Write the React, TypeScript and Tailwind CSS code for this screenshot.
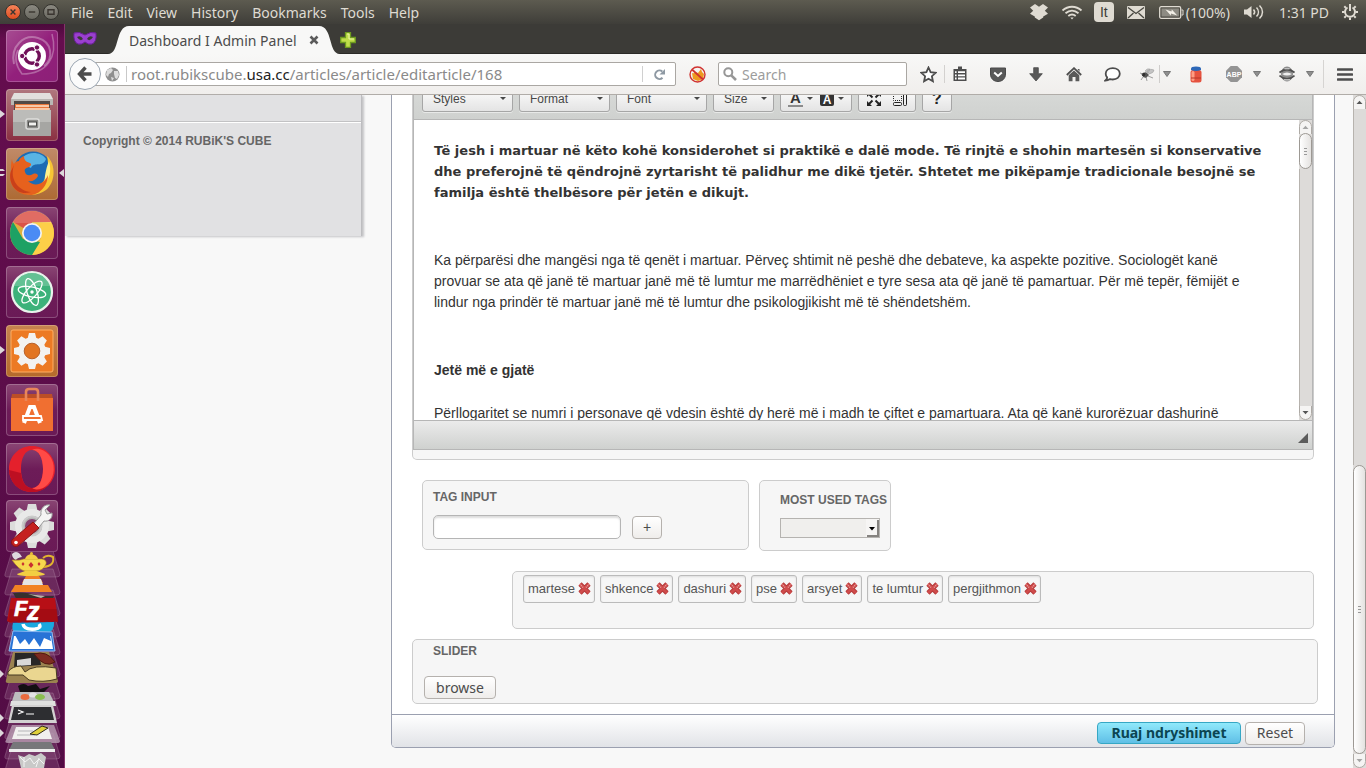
import React from "react";
import clsx from "clsx";

const UI = "font-['Noto_Sans','Open_Sans',sans-serif]";
const ARIAL = "font-['Liberation_Sans',Arial,sans-serif]";

/* ---------- Desktop top bar ---------- */

const MENUS = ["File", "Edit", "View", "History", "Bookmarks", "Tools", "Help"];

function WindowButton({ label, close, children }: { label: string; close?: boolean; children: React.ReactNode }) {
  return (
    <button
      aria-label={label}
      className={clsx(
        "flex size-4 items-center justify-center rounded-full border border-[#34332e]",
        close ? "bg-gradient-to-b from-[#f68358] to-[#dd4c1e]" : "bg-gradient-to-b from-[#8b8981] to-[#6a6961]",
      )}
    >
      <svg viewBox="0 0 14 14" className="size-3.5 shrink-0" fill="none" stroke="#3a3530" strokeWidth="1.4">
        {children}
      </svg>
    </button>
  );
}

function TopBar() {
  return (
    <header className="flex h-6 shrink-0 items-center bg-gradient-to-b from-[#5d5b50] to-[#3f3e39] text-[14px] text-[#dfdbd2]">
      <div className="flex w-[65px] shrink-0 gap-[3px] pl-[5px]">
        <WindowButton label="Close" close>
          <path d="M4.6 4.6l4.8 4.8M9.4 4.6L4.6 9.4" />
        </WindowButton>
        <WindowButton label="Minimize">
          <path d="M3.8 7h6.4" />
        </WindowButton>
        <WindowButton label="Maximize">
          <path d="M4 4.8h6v4.4H4z" />
        </WindowButton>
      </div>
      <nav className="flex gap-3.5 pl-1.5">
        {MENUS.map((m) => (
          <button key={m}>{m}</button>
        ))}
      </nav>
      <div className="ml-auto flex items-center">
        <svg viewBox="0 0 18 18" className="size-[18px]" fill="#dfdbd2">
          <path d="M5 1L9 3.8 13 1l5 3.6-3.2 3.1L18 10.8 13.2 13.5v1L9 17.2 4.8 14.5v-1L0 10.8l3.2-3.1L0 4.6z" />
        </svg>
        <svg viewBox="0 0 22 16" className="ml-[13px] h-4 w-[22px]" fill="none" stroke="#dfdbd2" strokeWidth="1.8">
          <path d="M1.5 6.5c5.5-5 13.500-5 19 0" />
          <path d="M4.500 9.300c4-3.500 9-3.500 13 0" />
          <path d="M7.300 12c2.500-2 5-2 7.400 0" />
          <path d="M9.300 13.600h3.400L11 15.600z" fill="#dfdbd2" stroke="none" />
        </svg>
        <span
          className={clsx(
            ARIAL,
            "ml-[11px] flex h-5 w-5 items-center justify-center rounded-sm bg-[#dfdbd2] text-[14px] text-[#3c3b37]",
          )}
        >
          It
        </span>
        <svg viewBox="0 0 18 13" className="ml-[13px] h-[13px] w-[18px]">
          <rect width="18" height="13" rx="1" fill="#dfdbd2" />
          <path d="M1 1.500l8 6 8-6M1 12l5.500-5M17 12l-5.500-5" fill="none" stroke="#47463f" strokeWidth="1.300" />
        </svg>
        <svg viewBox="0 0 25 13" className="ml-3.5 h-[13px] w-[25px]">
          <rect x=".7" y=".7" width="21" height="11.600" rx="1.500" fill="none" stroke="#dfdbd2" strokeWidth="1.300" />
          <rect x="2.500" y="2.500" width="17.400" height="8" fill="#8d8b83" />
          <path d="M22.500 4h1.500v5h-1.500" fill="none" stroke="#dfdbd2" />
          <path d="M6.500 3.500l6 2 .3-2 5.500 6-6.300-2-.2 2z" fill="#f3f0e8" />
        </svg>
        <span className="ml-0.5">(100%)</span>
        <svg viewBox="0 0 20 16" className="ml-3.5 h-4 w-5">
          <path d="M0 5.500h3L7.500 2v12L3 10.500H0z" fill="#dfdbd2" />
          <path
            d="M9.500 5.500c1.400 1.500 1.400 3.500 0 5M12.500 3.500c2.600 2.700 2.600 6.300 0 9M15.500 1.500c4 3.800 4 9.200 0 13"
            fill="none"
            stroke="#dfdbd2"
            strokeWidth="1.500"
          />
        </svg>
        <span className="ml-[15px]">1:31 PD</span>
        <svg viewBox="0 0 18 18" className="ml-3 mr-[7px] size-[18px]" fill="none" stroke="#dfdbd2">
          <path d="M6.500 4.500a5 5 0 1 0 5 0" strokeWidth="2" />
          <path d="M9 1v7" strokeWidth="2" />
          <path
            d="M3.300 3.300l1.600 1.600M14.700 3.300l-1.600 1.600M1 9h2.500M14.500 9H17M3.300 14.700l1.600-1.600M14.700 14.700l-1.600-1.600M9 14.500V17"
            strokeWidth="2"
          />
        </svg>
      </div>
    </header>
  );
}

/* ---------- Launcher ---------- */

function Tile({
  label,
  tone,
  left,
  right,
  children,
}: {
  label: string;
  tone: string;
  left?: "one" | "two";
  right?: boolean;
  children: React.ReactNode;
}) {
  return (
    <div className="relative flex justify-center pr-px">
      {left === "one" && (
        <svg viewBox="0 0 5 10" className="absolute left-0 top-5 h-2.5 w-[5px]">
          <path d="M0 1l5 4-5 4z" fill="#dcd7da" />
        </svg>
      )}
      {left === "two" && (
        <svg viewBox="0 0 5 10" className="absolute left-0 top-5 h-2.5 w-[5px]">
          <path d="M0 1h3l2 2H0zM0 6h5l-2 2H0z" fill="#dcd7da" />
        </svg>
      )}
      {right && (
        <svg viewBox="0 0 5 10" className="absolute right-0 top-5 h-2.5 w-[5px]">
          <path d="M5 1L0 5l5 4z" fill="#dcd7da" />
        </svg>
      )}
      <button
        aria-label={label}
        className={clsx("size-[52px] rounded-[4px] shadow-[inset_0_0_0_1px_rgba(255,255,255,0.22)]", tone)}
      >
        <svg viewBox="0 0 52 52" className="size-[52px]">
          {children}
        </svg>
      </button>
    </div>
  );
}

const DIM = "bg-gradient-to-b from-[#8a4574] via-[#6d1c58] to-[#6a1a56]";
const TEETH = [0, 45, 90, 135, 180, 225, 270, 315];

function Launcher() {
  return (
    <aside className="flex w-[65px] shrink-0 flex-col overflow-hidden border-r border-[#85336b] bg-gradient-to-b from-[#4b0a3b] via-[#650d4e] via-[2%] to-[#520c45] pt-1.5">
      <div className="flex shrink-0 flex-col gap-[7px]">
        <Tile label="Dash" tone="bg-gradient-to-br from-[#a74c92] via-[#93207c] to-[#8c2077]">
          <path d="M8 34C4 16 18 4 32 8s16 20 6 28" fill="none" stroke="#fff" strokeOpacity=".3" strokeWidth="2" />
          <path d="M46 4c6 22-4 40-30 40C10 36 8 28 12 20" fill="none" stroke="#fff" strokeOpacity=".3" strokeWidth="1.500" />
          <circle cx="26" cy="26" r="14" fill="#fff" />
          <circle cx="26" cy="26" r="7.300" fill="none" stroke="#701058" strokeWidth="3.400" />
          <path d="M17 26h4M30.500 18.200l-2 3.600M30.500 33.800l-2-3.600" stroke="#fff" strokeWidth="1.600" />
          <g fill="#701058" stroke="#fff">
            <circle cx="16.200" cy="26" r="2.700" />
            <circle cx="31" cy="17.500" r="2.700" />
            <circle cx="31" cy="34.500" r="2.700" />
          </g>
        </Tile>
        <Tile label="Files" left="one" tone="bg-gradient-to-b from-[#b0787f] to-[#8a2f42]">
          <path d="M8 4h36l3 6v6H5v-6z" fill="#e2e1de" />
          <path d="M5 10h42v6H5z" fill="#b9b8b4" />
          <path d="M8 12h36v12H8z" fill="#514a46" />
          <path d="M9 15h34v9H9z" fill="#e9773a" />
          <path d="M10 17h33M9 20h35" stroke="#fbe5cd" strokeWidth="1.400" />
          <path d="M7 21h38v26H7z" fill="#a6a6a3" />
          <path d="M7 21h38v12H7z" fill="#bcbcb9" />
          <rect x="20" y="30" width="13" height="10" rx="2" fill="#8b8b88" stroke="#dededc" strokeWidth="1.500" />
          <rect x="22.500" y="33" width="8" height="4" fill="#f2f2f0" stroke="#4b4b49" />
        </Tile>
        <Tile label="Firefox" left="two" right tone="bg-gradient-to-b from-[#c08a68] to-[#ad6a33]">
          <circle cx="27" cy="23" r="19.500" fill="#1c6cb4" />
          <path d="M17 9c7-6 18-5 23 2-3 9-12 2-15 9-4-2-8-4-8-11z" fill="#58b4e4" />
          <path d="M41 8c9 8 9 26-1 34-9 7-23 6-30-2 12 4 24 0 29-9 3-7 4-14 2-23z" fill="#f7c534" />
          <path d="M43 13c3 11 0 18-5 24 1-8 1-14 5-24z" fill="#fff18a" />
          <path
            d="M6 11c0 2 1 4 2 5 1-2 3-3 5-3 0-2 2-4 5-5 0 4 2 6 6 7 2 1 1 3-1 4-3 1-5 2-4 5 1 4 5 4 8 2 3-1 5 0 5 2-2 4-6 6-10 5 6 6 16 4 20-6 0 10-8 20-18 20C9 47 1 35 5 22c0-4 0-8 1-11z"
            fill="#e6611d"
          />
          <path d="M8 17c-5 15 5 26 17 27C12 49 1 36 5 23z" fill="#c9401a" />
        </Tile>
        <Tile label="Chrome" tone={DIM}>
          <circle cx="26" cy="26" r="22" fill="#ddb13d" />
          <path d="M26 26L7 15A22 22 0 0 1 45 15H26z" fill="#db5348" />
          <path d="M45 15a22 22 0 0 1-19 33l9-17-1-12-8-3z" fill="#fdcf48" />
          <path d="M7 15l10 17 17 3-8 13A22 22 0 0 1 7 15z" fill="#1da164" />
          <circle cx="26" cy="26" r="10" fill="#f4f4f2" />
          <circle cx="26" cy="26" r="8.300" fill="#4b8bf4" />
          <path d="M6 16a22 22 0 0 1 40 0z" fill="#fff" opacity=".15" />
        </Tile>
        <Tile label="Atom" tone={DIM}>
          <circle cx="26" cy="26" r="20" fill="#3cb27a" stroke="#e9f3ec" strokeWidth="2.200" />
          <path d="M8 20a19 19 0 0 1 36 0z" fill="#fff" opacity=".2" />
          <g fill="none" stroke="#fff" strokeWidth="1.300">
            <ellipse cx="26" cy="26" rx="5" ry="14" transform="rotate(-18 26 26)" />
            <ellipse cx="26" cy="26" rx="5" ry="14" transform="rotate(42 26 26)" />
            <ellipse cx="26" cy="26" rx="5" ry="14" transform="rotate(102 26 26)" />
          </g>
          <circle cx="26" cy="26" r="1.700" fill="#fff" />
        </Tile>
        <Tile label="System monitor" left="one" tone="bg-gradient-to-b from-[#c6834f] to-[#b56a2b]">
          <rect x="5" y="5" width="42" height="42" rx="2" fill="#ec7a24" stroke="#ffae62" />
          <g fill="#f3f2f0">
            {TEETH.map((a) => (
              <path key={a} d="M23 8h6l2 8H21z" transform={`rotate(${a} 26 26)`} />
            ))}
          </g>
          <circle cx="26" cy="26" r="10.500" fill="none" stroke="#f3f2f0" strokeWidth="6.500" />
          <circle cx="26" cy="26" r="7.800" fill="#e27522" stroke="#b9622a" />
        </Tile>
        <Tile label="Software center" tone={DIM}>
          <path d="M6 10h40l1 5H5z" fill="#bb4e27" />
          <path d="M5 14h42v33H5z" fill="#f06f31" />
          <path d="M20 17V8q0-3 3-3h6q3 0 3 3v9" fill="none" stroke="#e8865a" strokeWidth="2.600" />
          <path d="M18 39l6-16h4l6 16" fill="none" stroke="#fff" strokeWidth="4" />
          <path d="M17 32h18l1 4H17z" fill="#f06f31" stroke="#fff" strokeWidth="1.800" />
        </Tile>
        <Tile label="Opera" tone={DIM}>
          <path
            fillRule="evenodd"
            d="M26 3C13 3 3 13 3 26s10 23 23 23 23-10 23-23S39 3 26 3zm0 4c7 0 11 8 11 19s-4 19-11 19-11-8-11-19S19 7 26 7z"
            fill="#e4202c"
          />
          <path d="M26 7c5-3 13 0 17 5 7 8 6 22-1 29-4 5-12 7-16 4 7 0 11-8 11-19S33 7 26 7z" fill="#ff4a46" />
          <path d="M3 27c1 13 10 22 23 22 6 0 12-2 15-6-5 4-11 5-15 2-6 0-10-6-11-15z" fill="#bd0f22" />
        </Tile>
        <div className="-mt-0.5">
          <Tile label="Settings" tone={DIM}>
            <g fill="#dcdcdb">
              {TEETH.map((a) => (
                <path key={a} d="M22 4h8l2 9H20z" transform={`rotate(${a} 26 26)`} />
              ))}
            </g>
            <circle cx="26" cy="26" r="13.500" fill="none" stroke="#e9e9e8" strokeWidth="7" />
            <circle cx="26" cy="26" r="9.500" fill="#b6b6b5" stroke="#cbcbca" strokeWidth="2" />
            <circle cx="26" cy="26" r="7" fill="#86406f" />
            <path d="M26 26l9-11c-1-7 4-11 9-10l-5 5 2 4 5-1c1 5-3 9-8 8L30 31z" fill="#f4f4f3" stroke="#999" />
            <path d="M27 22l6 6-21 18c-4 2-8-2-6-6z" fill="#c5211f" stroke="#8d1414" />
            <circle cx="10" cy="42.500" r="1.800" fill="#fff" />
          </Tile>
        </div>
      </div>
      <CollapsedTiles />
    </aside>
  );
}

function CollapsedTiles() {
  return (
    <svg viewBox="0 0 65 217" className="-mt-px h-[217px] w-[65px] shrink-0">
      <g fill="#9d6b90" fillOpacity=".3" stroke="#c49fba" strokeOpacity=".3">
        {[0, 18, 39, 60, 78, 100, 122, 142, 162, 182, 196].map((y) => (
          <path key={y} d={`M12 ${y}h41l7 23q0 3-3 3H8q-4 0-3-3z`} />
        ))}
      </g>
      {/* lamp */}
      <path d="M12 3q4-4 8 0l2 3q-5 1-6 3-4-2-4-6z" fill="#dedadf" />
      <path d="M43 7q4-4 10-1 2 9-10 10" fill="none" stroke="#e2b32e" strokeWidth="2" />
      <path d="M12 9q8 1 12-1h18q5 1 4 5-3 7-10 7H25q-6-1-13-11z" fill="#f6d84e" stroke="#b98d1c" strokeWidth=".6" />
      <path d="M25 8q1-4 6-5 6 1 7 5z" fill="#f2cd46" />
      <circle cx="31.500" cy="2.500" r="1.500" fill="#e8bd36" />
      <path d="M25 20h12l8 3q0 2-14 2t-14-2z" fill="#f2ce42" />
      <path d="M31 11l2.500 3-2.500 3-2.500-3zM23 11l1.500 2-1.500 2-1.500-2zM39 11l1.500 2-1.500 2-1.500-2z" fill="#c93030" />
      {/* cone */}
      <path d="M26 25h13l4 7H22z" fill="#f08126" />
      <path d="M24 28h17l2 6H22z" fill="#e5e5e5" />
      <path d="M15 34h33l4 7H11z" fill="#f28223" />
      {/* brush */}
      <path d="M13 42q12-2 28 3l13 0-2 4H17z" fill="#35302e" />
      <path d="M28 43l17 2-4 2z" fill="#b9b2a8" />
      {/* filezilla */}
      <path d="M11 47h44l3 24-4-1-3 2-4-2-4 2-4-2-4 2-4-2-4 2-4-2-4 2-4-2-4 2-4-2z" fill="#b70f16" />
      <path d="M10 58h47l1 13H8z" fill="#8e090f" opacity=".45" />
      <g fill="#fff" stroke="#fff" strokeWidth=".6" fontFamily="Liberation Sans" fontStyle="italic" fontWeight="700">
        <text x="14" y="65" fontSize="22">F</text>
        <text x="27" y="69" fontSize="25">z</text>
      </g>
      {/* skype */}
      <path d="M13 72l41-1q1 9-8 12-17 4-31-1-4-4-2-10z" fill="#1aa8df" />
      <path d="M23 73q1 6 12 5 7-1 4-5" fill="none" stroke="#fff" strokeWidth="3.500" />
      {/* writer */}
      <path d="M13 80l39 1 3 19H9z" fill="#2873d6" stroke="#8fb9ef" />
      <path d="M14 85h37l2 13H12z" fill="#fff" />
      <path d="M15 84h35l1 6-7-3-4 9-6-9-5 7-4-6-5 5z" fill="#2873d6" />
      {/* folder */}
      <path d="M13 101h36l9 29q0 2-3 2H8q-3 0-2-3z" fill="#9b8350" />
      <path d="M15 102h24l2 12-27 2z" fill="#282727" />
      <path d="M17 109l14-2v7l-14 1z" fill="#d8d8d8" />
      <path d="M34 103q13-4 21 8-10 7-21-8z" fill="#7d2b21" stroke="#51190f" />
      <path d="M8 121q4-6 13-6l4 6q8-8 31-4l1 11q-14 4-28 1l-6-5H8z" fill="#ead690" stroke="#473b21" />
      {/* ink */}
      <path d="M18 135q6-4 10 0l8-2 4 5 10-3-7 7-14 1-9-2z" fill="#121012" />
      {/* disk */}
      <path d="M15 141h34l6 12H11z" fill="#bdbdbf" />
      <ellipse cx="25" cy="146" rx="4.500" ry="3" fill="#e86b3d" />
      <ellipse cx="33" cy="144" rx="4" ry="2.500" fill="#e3e3e3" />
      <ellipse cx="40" cy="146" rx="5" ry="3" fill="#8abd50" />
      <path d="M11 150h44l1 5H10z" fill="#dfe0df" />
      {/* terminal */}
      <path d="M12 154h41l4 18H8z" fill="#d2d1d1" />
      <path d="M14 156h37l3 13H11z" fill="#2d2e31" />
      <path d="M18 159l5 2-5 2M26 163h8" fill="none" stroke="#fff" strokeWidth="1.200" />
      {/* editor */}
      <path d="M12 174h42l6 16q0 2-3 2H8q-4 0-2-3z" fill="#b99eb3" opacity=".8" />
      <path d="M16 176h32l4 12H12z" fill="#f1f0ef" />
      <path d="M18 180h15M17 184h18" stroke="#b5b5b8" />
      <path d="M30 183l12-8 6 2-11 7z" fill="#dfd03a" stroke="#302a1c" />
      {/* drive */}
      <path d="M13 191h38l4 8H9z" fill="#77777a" />
      <path d="M9 198h46v3H9z" fill="#eeeeee" />
      {/* trash */}
      <path d="M18 204l6 2 5-3 6 2 6-3 5 4-2 11H21z" fill="#c9c9c8" />
      <path d="M20 206l5 5 5-4 4 6 5-5 5 5M24 206v10M39 207l-3 9" fill="none" stroke="#f3f3f3" />
      {/* running markers */}
      <path d="M0 119l4 4-4 4zM0 163l4 4-4 4zM0 178l4 4-4 4z" fill="#dcd7da" />
    </svg>
  );
}

/* ---------- Browser chrome ---------- */

function TabStrip() {
  return (
    <div className="flex h-[30px] shrink-0 items-end border-b border-[#2b2a27] bg-[#3c3b37]">
      <svg viewBox="0 0 24 16" className="ml-2 h-4 w-6 self-center">
        <path
          d="M1 2q5-2 11 2 6-4 11-2 1 9-4 11-4 1-7-2-3 3-7 2Q0 11 1 2z"
          fill="#9a40cf"
          stroke="#6a1e96"
        />
        <path d="M4 6q4-2 6 2-3 3-6-2zM20 6q-4-2-6 2 3 3 6-2z" fill="#3c3b37" />
      </svg>
      <div className="-mb-px ml-[11px] flex h-7 items-stretch">
        <svg viewBox="0 0 21 28" className="h-7 w-[21px]">
          <path d="M0 28C12 28 7 0 21 0v28z" fill="#f8f8f7" />
        </svg>
        <div className="flex items-center bg-[#f8f8f7] text-[14px] text-[#4c4c4c]">
          <span>Dashboard I Admin Panel</span>
          <button aria-label="Close tab" className="ml-3">
            <svg viewBox="0 0 10 10" className="size-2.5">
              <path d="M1.500 1.500l7 7M8.500 1.500l-7 7" stroke="#5b5b5b" strokeWidth="2.600" />
            </svg>
          </button>
        </div>
        <svg viewBox="0 0 21 28" className="h-7 w-[21px]">
          <path d="M0 0c14 0 9 28 21 28H0z" fill="#f8f8f7" />
        </svg>
      </div>
      <button aria-label="New tab" className="mb-[5px]">
        <svg viewBox="0 0 16 16" className="size-4">
          <path d="M5.500.700h5v4.800h4.800v5h-4.800v4.800h-5v-4.800H.700v-5h4.800z" fill="#c0dd4a" stroke="#6d9a1f" strokeWidth="1.300" />
          <path d="M7 2h2v5h5" fill="none" stroke="#ecf7a8" />
        </svg>
      </button>
    </div>
  );
}

function NavButton({ label, width, children }: { label: string; width: string; children: React.ReactNode }) {
  return (
    <button aria-label={label} className={clsx("flex h-8 shrink-0 items-center justify-center", width)}>
      {children}
    </button>
  );
}

function Caret() {
  return (
    <NavButton label="More" width="w-3.5">
      <svg viewBox="0 0 8 6" className="h-1.5 w-2">
        <path d="M.5.500h7L4 5.500z" fill="#8f8f8f" stroke="#777" />
      </svg>
    </NavButton>
  );
}

function NavBar() {
  return (
    <div className="flex h-[41px] shrink-0 items-center border-b border-[#b0aca8] bg-gradient-to-b from-[#f8f8f7] to-[#f0eeec]">
      <button
        aria-label="Back"
        className="relative z-10 ml-1 flex size-8 shrink-0 items-center justify-center rounded-full border border-[#9aa5b1] bg-[#fbfbfb]"
      >
        <svg viewBox="0 0 16 16" className="size-4">
          <path d="M8.500 1.500L2.500 8l6 6.500M3 8h11.500" fill="none" stroke="#4d4d4d" strokeWidth="3.400" />
        </svg>
      </button>
      <div className="-ml-2 flex h-6 min-w-0 flex-1 items-center rounded-r-[2px] border border-[#aaa7a3] bg-white pl-[11px]">
        <svg viewBox="0 0 15 15" className="size-[15px] shrink-0">
          <circle cx="7.500" cy="7.500" r="7" fill="#8e8e8e" />
          <path d="M2 3l4-2 2 2-2 3-2 1-1 3-2-2zM9 4l4 0 1 4-2 4-2-1-1-4zM6 10l3 1-2 3z" fill="#dcdcdc" />
        </svg>
        <span className="ml-1.5 h-4 w-px bg-[#c9c9c9]" />
        <div
          role="textbox"
          aria-label="Address"
          tabIndex={0}
          className="ml-1 flex-1 truncate text-[15px] leading-5 text-[#8a8a8a]"
        >
          root.rubikscube.<span className="text-[#222]">usa.cc</span>/articles/article/editarticle/168
        </div>
        <span className="h-4 w-px bg-[#d0d0d0]" />
        <button aria-label="Reload" className="flex w-8 items-center justify-center">
          <svg viewBox="0 0 13 13" className="size-[13px]">
            <path d="M9.500 9.800A4.300 4.300 0 1 1 9.300 3.500" fill="none" stroke="#8e99a3" strokeWidth="2" />
            <path d="M12 1v5.500H6.500z" fill="#8e99a3" />
          </svg>
        </button>
      </div>
      <NavButton label="Extension" width="w-[42px]">
        <svg viewBox="0 0 17 17" className="size-[17px]">
          <path d="M3 7q2 1 3-1l3 1 3-4 1 3 2 2-1 5-5 2-5-2z" fill="#ee9a1f" />
          <circle cx="8.500" cy="8.500" r="7.500" fill="none" stroke="#d03331" strokeWidth="1.400" />
          <path d="M3 3.500l11 10" stroke="#d03331" strokeWidth="1.700" />
        </svg>
      </NavButton>
      <label className="flex h-6 w-[189px] shrink-0 items-center rounded-[2px] border border-[#aaa7a3] bg-white pl-1">
        <svg viewBox="0 0 14 14" className="size-3.5 shrink-0" fill="none" stroke="#979797">
          <circle cx="5.300" cy="5.300" r="4" strokeWidth="2" />
          <path d="M8.300 8.300l4.700 4.700" strokeWidth="2.600" />
        </svg>
        <input
          aria-label="Search"
          placeholder="Search"
          className="ml-[5px] w-full min-w-0 bg-transparent text-[14px] outline-none placeholder:text-[#9c9c9c]"
        />
      </label>
      <NavButton label="Bookmark this page" width="w-[29px] ml-[7px]">
        <svg viewBox="0 0 17 17" className="size-[17px]">
          <path
            d="M8.500 1.500l2.100 4.700 5 .6-3.700 3.400 1 5-4.400-2.500-4.400 2.500 1-5L1.400 6.800l5-.6z"
            fill="#fff"
            stroke="#4d4d4d"
            strokeWidth="1.800"
          />
        </svg>
      </NavButton>
      <span className="ml-px h-[18px] w-px bg-[#d3d1cf]" />
      <NavButton label="Show bookmarks" width="w-[30px] mr-1">
        <svg viewBox="0 0 16 16" className="size-4">
          <path d="M6 .500h4V3h4.500v12h-13V3H6z" fill="#4d4d4d" />
          <path d="M3 5.200h1.600v1.800H3zM6 5.200h7v1.800H6zM3 8.400h1.600v1.800H3zM6 8.400h7v1.800H6zM3 11.600h1.600v1.800H3zM6 11.600h7v1.800H6z" fill="#fff" />
        </svg>
      </NavButton>
      <NavButton label="Pocket" width="w-[38px]">
        <svg viewBox="0 0 16 15" className="h-[15px] w-4">
          <path d="M.5 1h15v6c0 10-15 10-15 0z" fill="#595959" stroke="#4a4a4a" />
          <path d="M4.200 5.500L8 9l3.800-3.500" fill="none" stroke="#fff" strokeWidth="2" />
        </svg>
      </NavButton>
      <NavButton label="Downloads" width="w-[38px]">
        <svg viewBox="0 0 14 15" className="h-[15px] w-3.5">
          <path d="M4.700.700h4.600v6h4L7 14 .700 6.700h4z" fill="#595959" stroke="#4a4a4a" strokeWidth=".8" />
        </svg>
      </NavButton>
      <NavButton label="Home" width="w-[38px]">
        <svg viewBox="0 0 16 15" className="h-[15px] w-4">
          <path d="M.8 8L8 1.200 15.200 8" fill="none" stroke="#4d4d4d" strokeWidth="1.800" />
          <path d="M2.700 8.300L8 3.500l5.300 4.800v6H9.500V10h-3v4.300H2.700z" fill="#595959" />
          <path d="M11.500 2h2v3z" fill="#595959" />
        </svg>
      </NavButton>
      <NavButton label="Chat" width="w-[38px]">
        <svg viewBox="0 0 17 15" className="h-[15px] w-[17px]">
          <path
            d="M8.800 1.200c4 0 7 2.300 7 5.600s-3 5.700-7 5.700c-1 0-2-.2-2.800-.4-1.500 1-3 1.400-4.600 1.400 1.200-1 1.800-2 1.800-3-1-1-1.500-2.200-1.500-3.700 0-3.300 3-5.600 7.100-5.600z"
            fill="#fff"
            stroke="#4d4d4d"
            strokeWidth="1.800"
          />
        </svg>
      </NavButton>
      <NavButton label="Firebug" width="w-[22px] ml-[5px]">
        <svg viewBox="0 0 16 13" className="h-[13px] w-4">
          <path d="M8 3q4-3 7-1 0 3-5 4zM6 3q2-3 5-2l-2 4z" fill="#c4c4c4" stroke="#999" strokeWidth=".5" />
          <path d="M3 6q3-3 5-1l2 2-3 3-3-1z" fill="#555" />
          <circle cx="4.500" cy="6.500" r="1.800" fill="#2f2f2f" />
          <path d="M4 9l-2 3M7 9l1 4M1 5l3 1M9 8l5 2" stroke="#888" strokeWidth=".8" />
        </svg>
      </NavButton>
      <span className="ml-px h-[18px] w-px bg-[#cfcdcb]" />
      <Caret />
      <NavButton label="Storage" width="w-11">
        <svg viewBox="0 0 12 17" className="h-[17px] w-3">
          <rect x=".5" y="4" width="11" height="12.500" rx="2.500" fill="#e5523f" />
          <rect x="1.500" y="5" width="3" height="10" rx="1.500" fill="#ff9c83" />
          <path d="M1 12h10" stroke="#b83527" />
          <path d="M1 4V2.500Q1 .5 6 .5t5 2V4q-5 2-10 0z" fill="#2e68b8" />
        </svg>
      </NavButton>
      <NavButton label="Adblock" width="w-8">
        <svg viewBox="0 0 16 16" className="size-4">
          <path d="M4.700 0h6.600L16 4.700v6.600L11.300 16H4.700L0 11.300V4.700z" fill="#949494" />
          <text x="8" y="10.700" textAnchor="middle" fontFamily="Liberation Sans" fontWeight="700" fontSize="7" fill="#fff">
            ABP
          </text>
        </svg>
      </NavButton>
      <span className="w-4">
        <Caret />
      </span>
      <NavButton label="Proxy" width="w-8 ml-[5px]">
        <svg viewBox="0 0 16 16" className="size-4" fill="none">
          <ellipse cx="8" cy="8" rx="6" ry="7.500" fill="#8b8b8b" />
          <path d="M.5 6.500q7.500-6 15 0M.5 9.500q7.500 7 15 0" stroke="#505050" strokeWidth="1.700" />
          <path d="M3 8q5-3 10 0-5 3-10 0z" fill="#eee" />
          <path d="M5.500 2.800h5M5 13.800h6" stroke="#e2e2e2" />
        </svg>
      </NavButton>
      <Caret />
      <span className="ml-1.5 h-7 w-px bg-[#d6d4d2]" />
      <NavButton label="Menu" width="w-[42px]">
        <svg viewBox="0 0 16 13" className="h-[13px] w-4">
          <path d="M1 1.500h14M1 6.500h14M1 11.500h14" stroke="#4d4d4d" strokeWidth="2.600" strokeLinecap="round" />
        </svg>
      </NavButton>
    </div>
  );
}

/* ---------- Scroll bars ---------- */

function ScrollArrow({ down, faint }: { down?: boolean; faint?: boolean }) {
  return (
    <svg viewBox="0 0 13 14" className={clsx("h-3.5 w-full shrink-0", down && "rotate-180")}>
      <path d="M.5 14V6.500a6 6 0 0 1 12 0V14" fill="#f5f4f3" stroke="#aeaaa5" />
      <path d="M3.500 9l3-3.200 3 3.200z" fill={faint ? "#a5a5a5" : "#555"} />
    </svg>
  );
}

function Thumb({ className }: { className: string }) {
  return (
    <div
      className={clsx(
        "flex w-full flex-col items-center justify-center gap-[2px] rounded-full border border-[#9d9994] bg-gradient-to-r from-white to-[#e4e2e0]",
        className,
      )}
    >
      <span className="h-px w-[3px] bg-[#999]" />
      <span className="h-px w-[3px] bg-[#999]" />
      <span className="h-px w-[3px] bg-[#999]" />
    </div>
  );
}

/* ---------- Editor ---------- */

function Combo({ label, width }: { label: string; width: string }) {
  return (
    <button
      aria-haspopup="listbox"
      className={clsx(
        "flex h-[27px] items-center justify-between rounded-[3px] border border-[#a6a6a6] bg-gradient-to-b from-white to-[#e4e4e4] pl-2.5 pr-1.5 text-[12px] text-[#474747] shadow-[0_1px_0_rgba(255,255,255,0.5)]",
        width,
      )}
    >
      {label}
      <SmallCaret />
    </button>
  );
}

function SmallCaret() {
  return (
    <svg viewBox="0 0 6 3" className="h-[3px] w-1.5">
      <path d="M0 0h6L3 3z" fill="#474747" />
    </svg>
  );
}

const GROUP =
  "flex h-[27px] items-center rounded-[3px] border border-[#a6a6a6] bg-gradient-to-b from-white to-[#e4e4e4] shadow-[0_1px_0_rgba(255,255,255,0.5)]";

function Editor() {
  return (
    <section className="rounded-b-[5px] border border-t-0 border-[#ccc] bg-[#f6f6f6] pb-[9px]">
      <div className="border-x border-b border-[#b6b6b6]">
        <div className="flex h-[25px] items-end gap-1.5 overflow-hidden border-b border-[#b6b6b6] bg-gradient-to-b from-[#d6d8d6] to-[#cfd1cf] pb-[7px] pl-2">
          <Combo label="Styles" width="w-[91px]" />
          <Combo label="Format" width="w-[91px]" />
          <Combo label="Font" width="w-[91px]" />
          <Combo label="Size" width="w-[61px]" />
          <div className={clsx(GROUP, "w-[72px] justify-around px-1")}>
            <button aria-label="Text color" className="flex items-center gap-1">
              <svg viewBox="0 0 15 16" className="h-4 w-[15px]">
                <text x="7.500" y="12" textAnchor="middle" fontFamily="Liberation Sans" fontWeight="700" fontSize="15" fill="#333">
                  A
                </text>
                <path d="M0 15h15" stroke="#8b8b8b" strokeWidth="2" />
              </svg>
              <SmallCaret />
            </button>
            <button aria-label="Background color" className="flex items-center gap-1">
              <svg viewBox="0 0 14 14" className="size-3.5">
                <rect width="14" height="14" rx="2" fill="#333" />
                <text x="7" y="11.500" textAnchor="middle" fontFamily="Liberation Sans" fontWeight="700" fontSize="12" fill="#fff">
                  A
                </text>
              </svg>
              <SmallCaret />
            </button>
          </div>
          <div className={clsx(GROUP, "w-[58px] justify-around px-0.5")}>
            <button aria-label="Maximize">
              <svg viewBox="0 0 14 14" className="size-3.5">
                <path d="M0 0h5L0 5zM14 0v5L9 0zM0 14V9l5 5zM14 14H9l5-5z" fill="#222" />
                <path d="M2 2l3.500 3.500M12 2L8.500 5.500M2 12l3.500-3.500M12 12L8.500 8.500" stroke="#222" strokeWidth="2" />
              </svg>
            </button>
            <button aria-label="Show blocks">
              <svg viewBox="0 0 14 14" className="size-3.5" fill="none" stroke="#222">
                <path d="M.5 0v8.500h8V0" strokeDasharray="1 1" />
                <rect x="10.500" y="-3" width="3" height="16.500" rx="1" />
                <rect x=".5" y="10.500" width="8" height="3" rx="1" />
              </svg>
            </button>
          </div>
          <button aria-label="About" className={clsx(GROUP, "w-[30px] justify-center text-[16px] font-bold text-[#222]")}>
            ?
          </button>
        </div>
        <div className="flex h-[300px] bg-white">
          <div className="min-w-0 flex-1 overflow-hidden pl-5 pr-9 pt-5 text-[14px] leading-[21px] text-[#333]">
            <p className="font-['DejaVu_Sans',sans-serif] text-[13px] font-bold leading-[21px]">
              Të jesh i martuar në këto kohë konsiderohet si praktikë e dalë mode. Të rinjtë e shohin martesën si
              konservative dhe preferojnë të qëndrojnë zyrtarisht të palidhur me dikë tjetër. Shtetet me pikëpamje
              tradicionale besojnë se familja është thelbësore për jetën e dikujt.
            </p>
            <p className="mt-[47px]">
              Ka përparësi dhe mangësi nga të qenët i martuar. Përveç shtimit në peshë dhe debateve, ka aspekte pozitive.
              Sociologët kanë provuar se ata që janë të martuar janë më të lumtur me marrëdhëniet e tyre sesa ata që janë
              të pamartuar. Për më tepër, fëmijët e lindur nga prindër të martuar janë më të lumtur dhe psikologjikisht më
              të shëndetshëm.
            </p>
            <p className="mt-[47px] font-bold">Jetë më e gjatë</p>
            <p className="mt-[22px]">
              Përllogaritet se numri i personave që vdesin është dy herë më i madh te çiftet e pamartuara. Ata që kanë
              kurorëzuar dashurinë
            </p>
          </div>
          <div className="flex w-[13px] shrink-0 flex-col bg-[#dddbd9]">
            <ScrollArrow faint />
            <Thumb className="-mt-px h-9 shrink-0" />
            <div className="flex-1 border-l border-[#b7b3ae]" />
            <ScrollArrow down />
          </div>
        </div>
        <div className="flex h-[29px] items-end justify-end border-t border-[#b6b6b6] bg-gradient-to-b from-[#ebebeb] to-[#cfd1cf] pb-1.5 pr-1">
          <svg viewBox="0 0 10 10" className="size-2.5">
            <path d="M10 0v10H0z" fill="#5c5c5c" />
          </svg>
        </div>
      </div>
    </section>
  );
}

/* ---------- Tags ---------- */

const TAGS = ["martese", "shkence", "dashuri", "pse", "arsyet", "te lumtur", "pergjithmon"];
const BOX = "rounded-[5px] border border-[#ccc] bg-[#f6f6f6]";
const LABEL = "block text-[12px] font-bold leading-4 text-[#666]";
const BUTTON =
  "rounded-[4px] border border-[#b5b1ad] bg-gradient-to-b from-white to-[#efedeb] text-[14px] text-[#4c4c4c]";

function RemoveIcon() {
  return (
    <svg viewBox="0 0 13 13" className="size-[13px]">
      <path d="M2 2l9 9M11 2l-9 9" stroke="#b53a3a" strokeWidth="4.600" />
      <path d="M2 2l9 9M11 2l-9 9" stroke="#cf4b4b" strokeWidth="2.800" />
      <path d="M1.500 2l3.500 3.500M11.500 2L8 5.500" stroke="#e89a9a" strokeWidth="1.600" strokeDasharray="1 1" />
    </svg>
  );
}

function TagForms() {
  return (
    <>
      <div className="ml-2.5 mt-5 flex items-start gap-2.5">
        <div className={clsx(BOX, "h-[70px] w-[327px] pl-2.5 pt-2")}>
          <label htmlFor="tag" className={LABEL}>
            TAG INPUT
          </label>
          <div className="mt-2.5 flex items-center gap-[11px]">
            <input
              id="tag"
              className="h-6 w-[188px] rounded-[5px] border border-[#b5b5b5] bg-white px-2 text-[12px] shadow-[inset_0_2px_2px_#ddd]"
            />
            <button className={clsx(BUTTON, "flex h-[23px] w-[30px] items-center justify-center")}>+</button>
          </div>
        </div>
        <div className={clsx(BOX, "h-[71px] w-[132px] pl-5 pt-[11px]")}>
          <label htmlFor="most-used" className={clsx(LABEL, "whitespace-nowrap")}>
            MOST USED TAGS
          </label>
          <div className="relative mt-2.5 w-[100px]">
            <select
              id="most-used"
              className="block h-5 w-full appearance-none border border-[#b5b3b0] bg-[#f0efed] px-1 text-[12px]"
            />
            <svg viewBox="0 0 13 18" className="pointer-events-none absolute right-px top-px h-[18px] w-[13px]">
              <path d="M0 0h13v18H0z" fill="#f6f5f4" />
              <path d="M12 1v16H1" fill="none" stroke="#858380" strokeWidth="2" />
              <path d="M3 8h6l-3 3.500z" fill="#000" />
            </svg>
          </div>
        </div>
      </div>
      <ul className={clsx(BOX, "ml-[100px] mt-5 flex h-[58px] items-start gap-[5px] pl-2.5 pt-[3px] text-[13px] text-[#555]")}>
        {TAGS.map((t) => (
          <li
            key={t}
            className="flex h-7 items-center gap-[3px] whitespace-nowrap rounded-[3px] border border-[#bbb] pb-px pl-1 pr-[3px] shadow-[inset_0_1px_2px_#ddd]"
          >
            {t}
            <button aria-label={`Remove ${t}`}>
              <RemoveIcon />
            </button>
          </li>
        ))}
      </ul>
      <div className={clsx(BOX, "-mr-1 mb-2.5 mt-2.5 h-[65px] pt-[3px]")}>
        <label htmlFor="slider-browse" className={clsx(LABEL, "ml-5")}>
          SLIDER
        </label>
        <button id="slider-browse" className={clsx(BUTTON, UI, "ml-[11px] mt-[17px] block h-[23px] w-[72px] leading-5")}>
          browse
        </button>
      </div>
    </>
  );
}

/* ---------- Page ---------- */

function Page() {
  return (
    <div className={clsx("flex min-h-0 flex-1 items-stretch bg-[#f8f8f8]", ARIAL)}>
      <aside className="mr-0.5 h-[141px] w-[297px] shrink-0 border-r border-[#bdbdc0] bg-[#e1e1e3] shadow-[2px_1px_2px_#c4c4c6]">
        <div className="h-[27px] border-b border-[#c2c2c4]" />
        <p className="border-t border-white pl-[18px] pt-2.5 text-[12px] font-bold leading-4 text-[#666]">
          Copyright © 2014 RUBiK&apos;S CUBE
        </p>
      </aside>
      <main className="ml-[27px] mr-[18px] min-w-0 flex-1">
        <div className="overflow-hidden rounded-b-[5px] border border-t-0 border-[#9ba0b0] bg-white">
          <div className="px-5">
            <Editor />
            <TagForms />
          </div>
          <footer className="flex h-[33px] items-center justify-end gap-1 border-t border-[#9ba0b0] bg-gradient-to-b from-white to-[#e1e3e7] pr-[29px] pt-1">
            <button
              className={clsx(
                UI,
                "h-[22px] w-36 rounded-[4px] border border-[#36a7c4] bg-gradient-to-b from-[#90e9fb] to-[#5fbfe6] text-[14px] font-bold leading-5 text-[#0b4552]",
              )}
            >
              Ruaj ndryshimet
            </button>
            <button className={clsx(BUTTON, UI, "h-[23px] w-[60px] leading-5")}>Reset</button>
          </footer>
        </div>
      </main>
      <div className="flex w-[13px] shrink-0 flex-col bg-[#dddbd9]">
        <ScrollArrow />
        <div className="flex-[357] border-l border-[#b7b3ae]" />
        <Thumb className="min-h-0 flex-[287]" />
        <ScrollArrow down faint />
      </div>
    </div>
  );
}

export default function App() {
  return (
    <div className={clsx("flex h-screen flex-col overflow-hidden", UI)}>
      <TopBar />
      <div className="flex min-h-0 flex-1">
        <Launcher />
        <div className="flex min-w-0 flex-1 flex-col">
          <TabStrip />
          <NavBar />
          <Page />
        </div>
      </div>
    </div>
  );
}
